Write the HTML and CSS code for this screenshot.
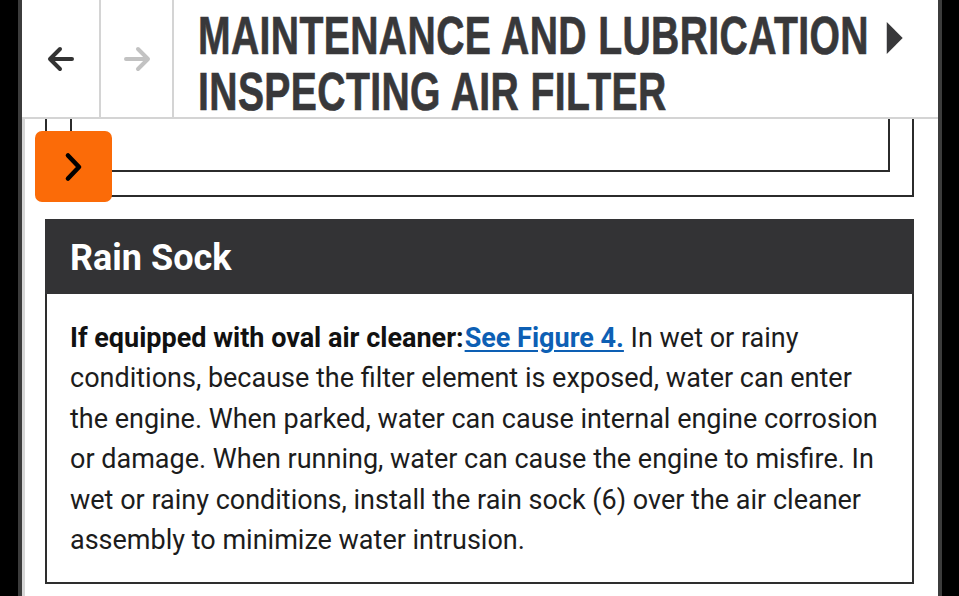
FILE: index.html
```html
<!DOCTYPE html>
<html lang="en">
<head>
<meta charset="utf-8">
<title>Inspecting Air Filter</title>
<link rel="stylesheet" href="styles.css">
</head>
<body>
<div class="frame">
  <header class="topbar">
    <div class="nav-cell">
      <svg class="nav-icon back" viewBox="0 0 28 28" width="28" height="28"><path d="M25 14H4M13 4L3 14l10 10" fill="none" stroke="currentColor" stroke-width="4" stroke-linecap="round" stroke-linejoin="round"/></svg>
    </div>
    <div class="nav-cell nav-cell-2">
      <svg class="nav-icon fwd" viewBox="0 0 28 28" width="28" height="28"><path d="M3 14h21M15 4l10 10-10 10" fill="none" stroke="currentColor" stroke-width="4" stroke-linecap="round" stroke-linejoin="round"/></svg>
    </div>
    <h1 class="title">
      <span class="title-inner">
        <span class="title-line">MAINTENANCE AND LUBRICATION<svg class="crumb-arrow" viewBox="0 0 24 34" width="24" height="34"><path d="M1 1L23 17 1 33Z" fill="currentColor"/></svg></span>
        <span class="title-line">INSPECTING AIR FILTER</span>
      </span>
    </h1>
  </header>
  <main class="content">
    <div class="figure-outer"><div class="figure-inner"></div></div>
    <button class="toggle" type="button" aria-label="Expand">
      <svg viewBox="0 0 20 30" width="20" height="30"><path d="M4 3.5l11 11.5L4 26.5" fill="none" stroke="#000" stroke-width="4.6" stroke-linecap="round" stroke-linejoin="round"/></svg>
    </button>
    <section class="step">
      <h2 class="step-head">Rain Sock</h2>
      <div class="step-body">
        <p><strong>If equipped with oval air cleaner:</strong><a href="#fig4" class="fig-link">See Figure 4.</a> In wet or rainy conditions, because the filter element is exposed, water can enter the engine. When parked, water can cause internal engine corrosion or damage. When running, water can cause the engine to misfire. In wet or rainy conditions, install the rain sock (6) over the air cleaner assembly to minimize water intrusion.</p>
      </div>
    </section>
  </main>
</div>
</body>
</html>
```

FILE: styles.css
```css
html, body {
  margin: 0;
  padding: 0;
  background: #000;
  height: 596px;
  overflow: hidden;
}

.frame {
  margin-left: 18px;
  width: 916px;
  height: 596px;
  border-left: 4px solid #3c3c3c;
  border-right: 4px solid #3c3c3c;
  background: #fff;
  font-family: Roboto, "Liberation Sans", sans-serif;
}

.topbar {
  display: flex;
  height: 117px;
  border-bottom: 2px solid #d4d4d4;
}

.nav-cell {
  flex: 0 0 auto;
  width: 77px;
  border-right: 2px solid #d4d4d4;
  display: flex;
  align-items: center;
  justify-content: center;
  padding-top: 1px;
}

.nav-cell-2 {
  width: 71px;
}

.nav-icon.back { color: #333; }
.nav-icon.fwd { color: #c2c2c2; }

.title {
  flex: 1 1 auto;
  min-width: 0;
  margin: 0;
  padding: 7px 0 0 24px;
  font-family: "Liberation Sans", Arial, sans-serif;
  font-weight: 700;
  font-size: 54px;
  line-height: 56px;
  letter-spacing: 0.5px;
  color: #38383a;
  -webkit-text-stroke: 0.7px #38383a;
  white-space: nowrap;
}

.title-inner {
  display: block;
  width: 1000px;
  transform: scaleX(0.725);
  transform-origin: left top;
}

.title-line {
  display: block;
}

.crumb-arrow {
  color: #38383a;
  margin-left: 24px;
  vertical-align: -1px;
}

.content {
  position: relative;
  border-left: 3px solid #d6d6d6;
  height: 477px;
}

.figure-outer {
  margin: 0 24px 0 20px;
  height: 76px;
  border: 2px solid #2b2b2b;
  border-top: none;
}

.figure-inner {
  margin: 0 22px 0 23px;
  height: 51px;
  border: 2px solid #2b2b2b;
  border-top: none;
}

.toggle {
  position: absolute;
  left: 10px;
  top: 12px;
  width: 77px;
  height: 71px;
  border: none;
  border-radius: 7px;
  background: #fb6b08;
  padding: 0;
  display: flex;
  align-items: center;
  justify-content: center;
}

.step {
  margin: 22px 24px 0 20px;
}

.step-head {
  margin: 0;
  height: 72px;
  padding: 3px 0 0 25px;
  background: #333335;
  color: #fff;
  font-weight: 700;
  font-size: 36px;
  line-height: 72px;
}

.step-body {
  border: 2px solid #2e2e2e;
  border-top: none;
  padding: 24px 22px 22px 23px;
}

.step-body p {
  margin: 0;
  font-size: 27px;
  line-height: 40.4px;
  color: #1c1c1c;
}

.step-body strong {
  font-weight: 700;
  color: #111;
}

.fig-link {
  margin-left: 1px;
  color: #0d5fb4;
  font-weight: 700;
  text-decoration: underline;
  text-underline-offset: 3px;
}
```
